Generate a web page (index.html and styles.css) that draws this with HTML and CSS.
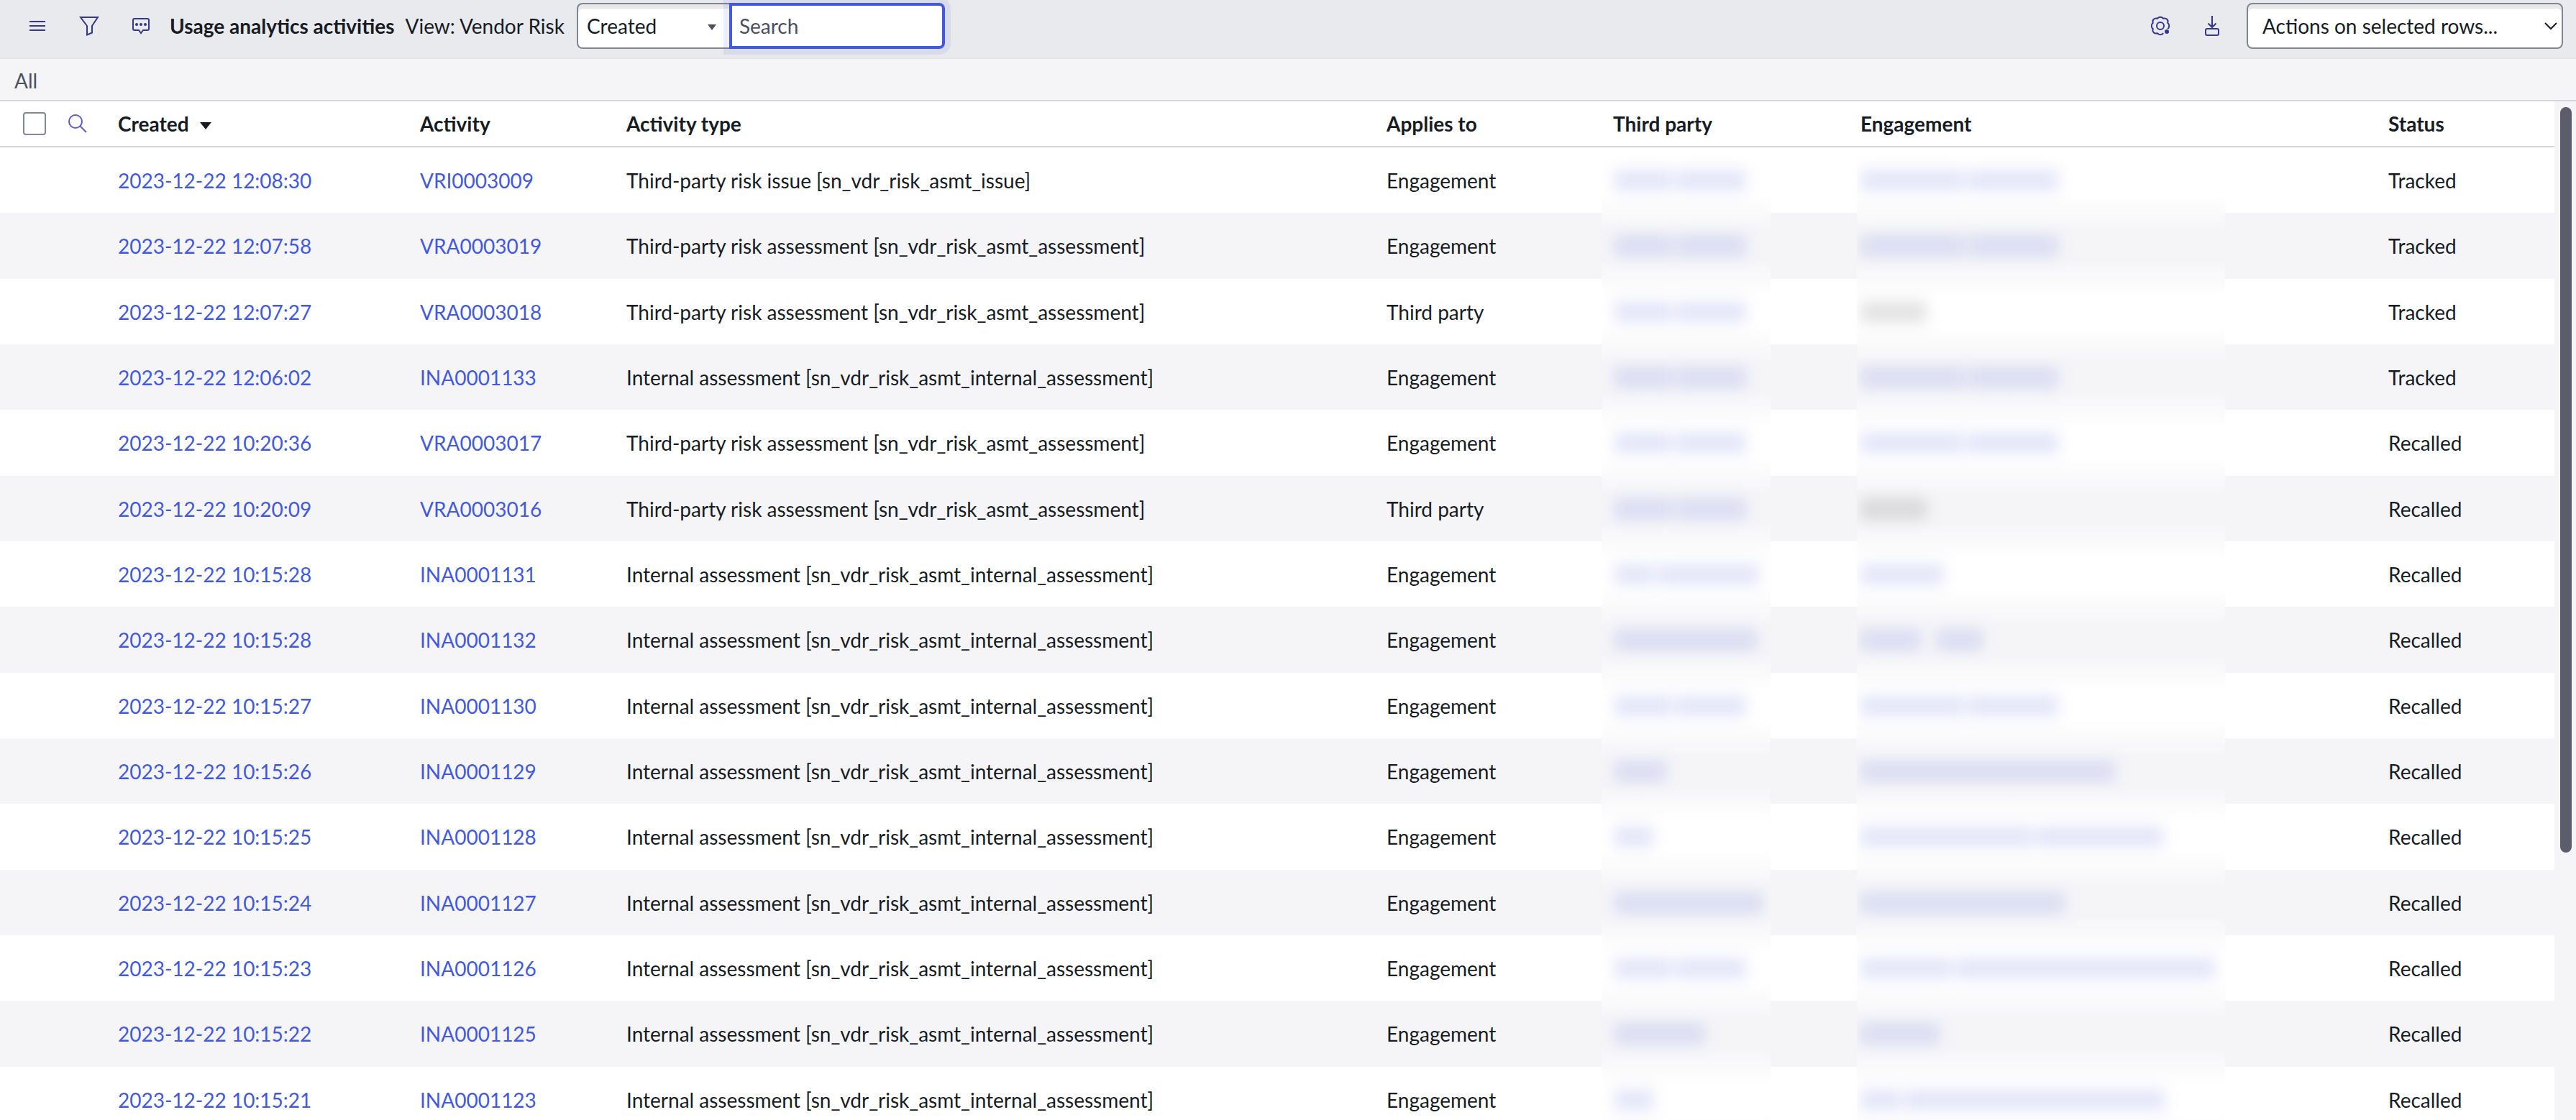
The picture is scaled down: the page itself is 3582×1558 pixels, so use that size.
FILE: index.html
```
<!DOCTYPE html>
<html lang="en">
<head>
  <meta charset="UTF-8" />
  <meta name="viewport" content="width=device-width, initial-scale=1" />
  <title>Usage analytics activities</title>
  <link rel="stylesheet" href="styles.css">
</head>
<body>
  <header class="toolbar">
    <button type="button" class="icon-btn" aria-label="List controls">
      <svg width="28" height="28" viewBox="0 0 28 28"><path d="M3 8h22M3 14h22M3 20h22" /></svg>
    </button>
    <button type="button" class="icon-btn" aria-label="Filter">
      <svg width="28" height="28" viewBox="0 0 28 28"><path d="M2 2h24L18 14v9.500l-7 3V14z" /></svg>
    </button>
    <button type="button" class="icon-btn" aria-label="Activity stream">
      <svg width="28" height="28" viewBox="0 0 28 28"><path d="M5 4h18q2 0 2 2v12q0 2-2 2h-6l-3 4-3-4H5q-2 0-2-2V6q0-2 2-2z" /><g class="solid"><circle cx="8" cy="12" r="2" /><circle cx="14" cy="12" r="2" /><circle cx="20" cy="12" r="2" /></g></svg>
    </button>
    <h1 class="title">Usage analytics activities</h1>
    <span class="view">View: Vendor Risk</span>
    <div class="search-group">
      <div class="select-wrap">
        <select class="select field-select" aria-label="Search field">
          <option>Created</option>
        </select>
        <svg class="caret" width="12" height="8" viewBox="0 0 12 8"><path d="M0 0h12L6 8z" /></svg>
      </div>
      <input type="text" class="search" placeholder="Search" aria-label="Search" />
    </div>
    <div class="toolbar-right">
      <button type="button" class="icon-btn" aria-label="Personalize list">
        <svg width="30" height="30" viewBox="0 0 30 30">
          <path d="M19.200 25.200A5 4.500 0 0 1 10.800 25.200A4.600 4.600 0 0 1 4.800 19.200A4.500 5 0 0 1 4.800 10.800A4.600 4.600 0 0 1 10.800 4.800A5 4.500 0 0 1 19.200 4.800A4.600 4.600 0 0 1 25.200 10.800A4.500 5 0 0 1 25.200 19.200" />
          <circle cx="15" cy="15" r="5" />
          <circle class="solid" cx="24" cy="23" r="3" />
        </svg>
      </button>
      <button type="button" class="icon-btn" aria-label="Export">
        <svg width="30" height="30" viewBox="0 0 30 30"><path d="M15 1v16M9.500 11.500l5.500 5.500 5.500-5.500" /><rect x="6" y="19" width="18" height="9" rx="2" /></svg>
      </button>
      <div class="select-wrap">
        <select class="select actions-select" aria-label="Actions on selected rows">
          <option>Actions on selected rows...</option>
        </select>
        <svg class="chevron" width="18" height="12" viewBox="0 0 18 12"><path d="M1 2l8 8 8-8" /></svg>
      </div>
    </div>
  </header>

  <nav class="breadcrumb"><a href="#">All</a></nav>

  <main class="list">
    <div class="list-scroll">
      <table class="list-table">
        <colgroup>
          <col class="col-select" />
          <col class="col-created" />
          <col class="col-activity" />
          <col class="col-type" />
          <col class="col-applies" />
          <col class="col-party" />
          <col class="col-engagement" />
          <col />
        </colgroup>
        <thead>
          <tr>
            <th class="select-cell">
              <div class="select-tools">
                <input type="checkbox" class="checkbox" aria-label="Select all" />
                <button type="button" class="icon-btn find-btn" aria-label="Show column search">
                  <svg width="26" height="26" viewBox="0 0 26 26"><circle cx="10" cy="10" r="9" /><path d="M16.500 16.500L25 25" /></svg>
                </button>
              </div>
            </th>
            <th>Created <svg class="sort" width="16" height="10" viewBox="0 0 16 10"><path d="M0 0h16L8 10z" /></svg></th>
            <th>Activity</th>
            <th>Activity type</th>
            <th>Applies to</th>
            <th>Third party</th>
            <th>Engagement</th>
            <th>Status</th>
          </tr>
        </thead>
        <tbody>
          <tr>
            <td></td>
            <td><a href="#">2023-12-22 12:08:30</a></td>
            <td><a href="#">VRI0003009</a></td>
            <td>Third-party risk issue [sn_vdr_risk_asmt_issue]</td>
            <td>Engagement</td>
            <td class="hidden-cell"><div class="mask party"><i style="width:80px"></i><i style="width:98px"></i></div></td>
            <td class="hidden-cell"><div class="mask engagement"><i style="width:144px"></i><i style="width:126px"></i></div></td>
            <td>Tracked</td>
          </tr>
          <tr>
            <td></td>
            <td><a href="#">2023-12-22 12:07:58</a></td>
            <td><a href="#">VRA0003019</a></td>
            <td>Third-party risk assessment [sn_vdr_risk_asmt_assessment]</td>
            <td>Engagement</td>
            <td class="hidden-cell"><div class="mask party"><i style="width:80px"></i><i style="width:98px"></i></div></td>
            <td class="hidden-cell"><div class="mask engagement"><i style="width:144px"></i><i style="width:126px"></i></div></td>
            <td>Tracked</td>
          </tr>
          <tr>
            <td></td>
            <td><a href="#">2023-12-22 12:07:27</a></td>
            <td><a href="#">VRA0003018</a></td>
            <td>Third-party risk assessment [sn_vdr_risk_asmt_assessment]</td>
            <td>Third party</td>
            <td class="hidden-cell"><div class="mask party"><i style="width:80px"></i><i style="width:98px"></i></div></td>
            <td class="hidden-cell"><div class="mask engagement plain"><i style="width:92px"></i></div></td>
            <td>Tracked</td>
          </tr>
          <tr>
            <td></td>
            <td><a href="#">2023-12-22 12:06:02</a></td>
            <td><a href="#">INA0001133</a></td>
            <td>Internal assessment [sn_vdr_risk_asmt_internal_assessment]</td>
            <td>Engagement</td>
            <td class="hidden-cell"><div class="mask party"><i style="width:80px"></i><i style="width:98px"></i></div></td>
            <td class="hidden-cell"><div class="mask engagement"><i style="width:144px"></i><i style="width:126px"></i></div></td>
            <td>Tracked</td>
          </tr>
          <tr>
            <td></td>
            <td><a href="#">2023-12-22 10:20:36</a></td>
            <td><a href="#">VRA0003017</a></td>
            <td>Third-party risk assessment [sn_vdr_risk_asmt_assessment]</td>
            <td>Engagement</td>
            <td class="hidden-cell"><div class="mask party"><i style="width:80px"></i><i style="width:98px"></i></div></td>
            <td class="hidden-cell"><div class="mask engagement"><i style="width:144px"></i><i style="width:126px"></i></div></td>
            <td>Recalled</td>
          </tr>
          <tr>
            <td></td>
            <td><a href="#">2023-12-22 10:20:09</a></td>
            <td><a href="#">VRA0003016</a></td>
            <td>Third-party risk assessment [sn_vdr_risk_asmt_assessment]</td>
            <td>Third party</td>
            <td class="hidden-cell"><div class="mask party"><i style="width:80px"></i><i style="width:98px"></i></div></td>
            <td class="hidden-cell"><div class="mask engagement plain"><i style="width:92px"></i></div></td>
            <td>Recalled</td>
          </tr>
          <tr>
            <td></td>
            <td><a href="#">2023-12-22 10:15:28</a></td>
            <td><a href="#">INA0001131</a></td>
            <td>Internal assessment [sn_vdr_risk_asmt_internal_assessment]</td>
            <td>Engagement</td>
            <td class="hidden-cell"><div class="mask party"><i style="width:54px"></i><i style="width:142px"></i></div></td>
            <td class="hidden-cell"><div class="mask engagement"><i style="width:116px"></i></div></td>
            <td>Recalled</td>
          </tr>
          <tr>
            <td></td>
            <td><a href="#">2023-12-22 10:15:28</a></td>
            <td><a href="#">INA0001132</a></td>
            <td>Internal assessment [sn_vdr_risk_asmt_internal_assessment]</td>
            <td>Engagement</td>
            <td class="hidden-cell"><div class="mask party"><i style="width:198px"></i></div></td>
            <td class="hidden-cell"><div class="mask engagement wide-gap"><i style="width:84px"></i><i style="width:64px"></i></div></td>
            <td>Recalled</td>
          </tr>
          <tr>
            <td></td>
            <td><a href="#">2023-12-22 10:15:27</a></td>
            <td><a href="#">INA0001130</a></td>
            <td>Internal assessment [sn_vdr_risk_asmt_internal_assessment]</td>
            <td>Engagement</td>
            <td class="hidden-cell"><div class="mask party"><i style="width:80px"></i><i style="width:98px"></i></div></td>
            <td class="hidden-cell"><div class="mask engagement"><i style="width:144px"></i><i style="width:126px"></i></div></td>
            <td>Recalled</td>
          </tr>
          <tr>
            <td></td>
            <td><a href="#">2023-12-22 10:15:26</a></td>
            <td><a href="#">INA0001129</a></td>
            <td>Internal assessment [sn_vdr_risk_asmt_internal_assessment]</td>
            <td>Engagement</td>
            <td class="hidden-cell"><div class="mask party"><i style="width:72px"></i></div></td>
            <td class="hidden-cell"><div class="mask engagement"><i style="width:354px"></i></div></td>
            <td>Recalled</td>
          </tr>
          <tr>
            <td></td>
            <td><a href="#">2023-12-22 10:15:25</a></td>
            <td><a href="#">INA0001128</a></td>
            <td>Internal assessment [sn_vdr_risk_asmt_internal_assessment]</td>
            <td>Engagement</td>
            <td class="hidden-cell"><div class="mask party"><i style="width:54px"></i></div></td>
            <td class="hidden-cell"><div class="mask engagement"><i style="width:240px"></i><i style="width:176px"></i></div></td>
            <td>Recalled</td>
          </tr>
          <tr>
            <td></td>
            <td><a href="#">2023-12-22 10:15:24</a></td>
            <td><a href="#">INA0001127</a></td>
            <td>Internal assessment [sn_vdr_risk_asmt_internal_assessment]</td>
            <td>Engagement</td>
            <td class="hidden-cell"><div class="mask party"><i style="width:206px"></i></div></td>
            <td class="hidden-cell"><div class="mask engagement"><i style="width:284px"></i></div></td>
            <td>Recalled</td>
          </tr>
          <tr>
            <td></td>
            <td><a href="#">2023-12-22 10:15:23</a></td>
            <td><a href="#">INA0001126</a></td>
            <td>Internal assessment [sn_vdr_risk_asmt_internal_assessment]</td>
            <td>Engagement</td>
            <td class="hidden-cell"><div class="mask party"><i style="width:80px"></i><i style="width:98px"></i></div></td>
            <td class="hidden-cell"><div class="mask engagement"><i style="width:128px"></i><i style="width:360px"></i></div></td>
            <td>Recalled</td>
          </tr>
          <tr>
            <td></td>
            <td><a href="#">2023-12-22 10:15:22</a></td>
            <td><a href="#">INA0001125</a></td>
            <td>Internal assessment [sn_vdr_risk_asmt_internal_assessment]</td>
            <td>Engagement</td>
            <td class="hidden-cell"><div class="mask party"><i style="width:126px"></i></div></td>
            <td class="hidden-cell"><div class="mask engagement"><i style="width:110px"></i></div></td>
            <td>Recalled</td>
          </tr>
          <tr>
            <td></td>
            <td><a href="#">2023-12-22 10:15:21</a></td>
            <td><a href="#">INA0001123</a></td>
            <td>Internal assessment [sn_vdr_risk_asmt_internal_assessment]</td>
            <td>Engagement</td>
            <td class="hidden-cell"><div class="mask party"><i style="width:54px"></i></div></td>
            <td class="hidden-cell"><div class="mask engagement"><i style="width:56px"></i><i style="width:362px"></i></div></td>
            <td>Recalled</td>
          </tr>
        </tbody>
      </table>
    </div>
    <div class="scrollbar"><div class="thumb"></div></div>
  </main>
</body>
</html>
```
FILE: styles.css
```
* {
  box-sizing: border-box;
}

body {
  display: flex;
  flex-direction: column;
  height: 100vh;
  margin: 0;
  overflow: hidden;
  font-family: Lato, "Liberation Sans", sans-serif;
  font-size: 28px;
  line-height: 36px;
  color: #161b24;
  background: #fff;
}

a {
  color: #4259de;
  text-decoration: none;
}

/* toolbar */
.toolbar {
  display: flex;
  align-items: center;
  flex-shrink: 0;
  height: 82px;
  padding: 0 18px 8px 38px;
  background: #e9eaee;
  border-bottom: 2px solid #e6e6e9;
}

.icon-btn {
  display: flex;
  margin: 0 44px 0 0;
  padding: 0;
  border: none;
  background: none;
  cursor: pointer;
}

.icon-btn svg {
  fill: none;
  stroke: #34378a;
  stroke-width: 2;
}

.icon-btn .solid {
  fill: #34378a;
  stroke: none;
}

.icon-btn:nth-of-type(3) {
  margin-right: 26px;
}

.title {
  margin: 0 15px 0 0;
  font-size: 28px;
  font-weight: 700;
}

.view {
  margin-right: 17px;
}

.search-group {
  display: flex;
}

.select-wrap {
  position: relative;
}

.select,
.search {
  display: block;
  height: 64px;
  margin: 0;
  font: inherit;
  color: inherit;
  background: #fff;
}

.select {
  appearance: none;
  border: 2px solid #7f8591;
  border-radius: 8px;
  box-shadow: inset 0 6px 0 #e8e8e8;
}

.field-select {
  width: 212px;
  padding: 0 40px 0 12px;
  border-right: none;
  border-radius: 8px 0 0 8px;
}

.actions-select {
  width: 440px;
  padding: 0 40px 0 20px;
}

.caret {
  position: absolute;
  top: 30px;
  right: 18px;
  fill: #4a505f;
}

.chevron {
  position: absolute;
  top: 26px;
  right: 8px;
  fill: none;
  stroke: #161b24;
  stroke-width: 2;
}

.search {
  position: relative;
  width: 300px;
  padding: 0 10px;
  border: 4px solid #4259de;
  border-radius: 0 8px 8px 0;
  box-shadow: 0 0 0 8px rgba(66, 89, 222, 0.1);
  outline: none;
}

.search::placeholder {
  color: #4a505f;
  opacity: 1;
}

.toolbar-right {
  display: flex;
  align-items: center;
  margin-left: auto;
}

.toolbar-right .icon-btn {
  margin-right: 42px;
}

.toolbar-right .icon-btn:nth-of-type(2) {
  margin-right: 33px;
}

/* breadcrumb */
.breadcrumb {
  flex-shrink: 0;
  padding: 12px 20px 9px;
  background: #f5f5f8;
  border-bottom: 2px solid #d4d4da;
}

.breadcrumb a {
  color: #4a505f;
}

/* list */
.list {
  display: flex;
  flex: 1;
  min-height: 0;
}

.list-scroll {
  flex: 1;
  overflow: hidden;
}

.list-table {
  width: 100%;
  table-layout: fixed;
  border-collapse: separate;
  border-spacing: 0;
}

.col-select { width: 148px; }
.col-created { width: 420px; }
.col-activity { width: 287px; }
.col-type { width: 1057px; }
.col-applies { width: 315px; }
.col-party { width: 344px; }
.col-engagement { width: 734px; }

.list-table th,
.list-table td {
  padding: 0 16px;
  text-align: left;
  white-space: nowrap;
}

.list-table th {
  height: 64px;
  font-weight: 700;
  border-bottom: 2px solid #d4d4da;
}

.list-table td {
  height: 91px;
}

.list-table tr:nth-child(3n+2) td {
  height: 92px;
}

.list-table tbody tr:nth-child(even) {
  background: #f5f5f8;
}

.list-table .select-cell {
  padding: 0 0 0 32px;
}

.select-tools {
  display: flex;
  align-items: center;
}

.checkbox {
  appearance: none;
  width: 32px;
  height: 32px;
  margin: 0 31px 0 0;
  border: 2px solid #858995;
  border-radius: 4px;
  background: #fff;
}

.find-btn {
  margin: 0;
}

.find-btn svg {
  stroke: #5a5ccb;
}

.sort {
  margin-left: 9px;
  vertical-align: 3px;
  fill: #161b24;
}

/* masked values */
.list-table .hidden-cell {
  padding: 0;
}

.mask {
  display: flex;
  align-items: center;
  gap: 5px;
  height: 91px;
  overflow: hidden;
  background: linear-gradient(#fafafb, #fff 26px, #fff 65px, #fafafb);
}

tr:nth-child(3n+2) .mask {
  height: 92px;
}

tr:first-child .mask {
  background: linear-gradient(#fff, #fff 65px, #fafafb);
}

tr:nth-child(even) .mask {
  background: linear-gradient(#fafafb, #f5f5f8 26px, #f5f5f8 65px, #fafafb);
}

.mask i {
  height: 30px;
  background: rgba(66, 76, 214, 0.14);
  filter: blur(10px);
}

.party {
  width: 235px;
  padding-left: 18px;
}

.engagement {
  width: 512px;
  margin-left: 11px;
  padding-left: 5px;
}

.mask.wide-gap {
  gap: 22px;
}

.mask.plain i {
  background: rgba(0, 0, 0, 0.11);
}

/* scrollbar */
.scrollbar {
  width: 30px;
  padding: 8px 6px 8px 8px;
  background: #f5f5f8;
}

.thumb {
  height: 74%;
  border-radius: 8px;
  background: #5d5c6c;
}
```
